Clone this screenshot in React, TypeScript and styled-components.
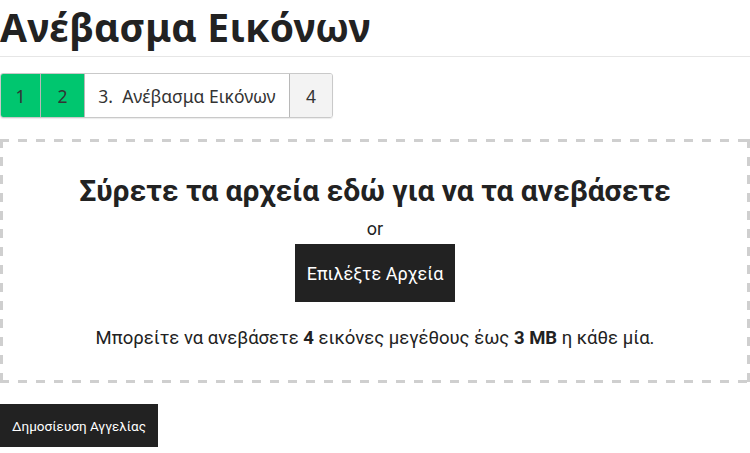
import React from "react";
import styled, { createGlobalStyle } from "styled-components";

const Global = createGlobalStyle`
  html, body { margin: 0; padding: 0; background: #fff; }
  body { font-family: "Noto Sans", sans-serif; color: #222; }
  * { box-sizing: border-box; }
`;

const Page = styled.div`
  width: 750px;
  display: flex;
  flex-direction: column;
`;

const Title = styled.h1`
  margin: 0;
  padding: 4px 0 6px;
  font-family: "Noto Sans", sans-serif;
  font-weight: 700;
  font-size: 39px;
  line-height: 46px;
  color: #222;
  letter-spacing: 0.2px;
  border-bottom: 1px solid #e6e6e6;
`;

const Steps = styled.div`
  display: flex;
  align-self: flex-start;
  margin-top: 16px;
  height: 45px;
  border: 1px solid #c9c9c9;
  border-radius: 3px;
  overflow: hidden;
  box-shadow: 0 1px 1px rgba(0,0,0,0.08);
`;

const Step = styled.div<{ $bg: string; $w: number }>`
  display: flex;
  align-items: center;
  justify-content: center;
  width: ${p => p.$w}px;
  background: ${p => p.$bg};
  font-family: "Noto Sans", sans-serif;
  font-size: 17.5px;
  color: #333;
  & + & { border-left: 1px solid #b8b8b8; }
`;

const dashH = "linear-gradient(to right, #cfcfcf 9px, transparent 9px)";
const dashV = "linear-gradient(to bottom, #cfcfcf 9px, transparent 9px)";

const Drop = styled.div`
  margin-top: 21px;
  height: 244px;
  padding: 34px 3px 3px;
  background:
    ${dashH} left top / 18px 3px repeat-x,
    ${dashH} left bottom / 18px 3px repeat-x,
    ${dashV} left top / 3px 18px repeat-y,
    ${dashV} right top / 3px 18px repeat-y;
  display: flex;
  flex-direction: column;
  align-items: center;
  font-family: Roboto, sans-serif;
`;

const DropTitle = styled.h2`
  margin: 0;
  font-family: Roboto, sans-serif;
  font-weight: 700;
  font-size: 30px;
  line-height: 36px;
  color: #222;
`;

const Or = styled.div`
  margin-top: 10px;
  font-size: 18px;
  line-height: 20px;
  color: #222;
`;

const DarkButton = styled.button<{ $size: number; $w: number; $h: number }>`
  border: none;
  background: #222;
  color: #fff;
  width: ${p => p.$w}px;
  height: ${p => p.$h}px;
  font-family: Roboto, sans-serif;
  font-size: ${p => p.$size}px;
  padding: 0;
  cursor: pointer;
`;

const Info = styled.p`
  margin: 24px 0 0;
  font-size: 18.5px;
  line-height: 24px;
  color: #222;
  b { font-weight: 700; }
`;

const Footer = styled.div`
  margin-top: 21px;
  display: flex;
`;

export default function App() {
  return (
    <Page>
      <Global />
      <Title>Ανέβασμα Εικόνων</Title>
      <Steps>
        <Step $bg="#00c66f" $w={39}>1</Step>
        <Step $bg="#00c66f" $w={44}>2</Step>
        <Step $bg="#fff" $w={205}>3.&nbsp; Ανέβασμα Εικόνων</Step>
        <Step $bg="#f3f3f3" $w={43}>4</Step>
      </Steps>
      <Drop>
        <DropTitle>Σύρετε τα αρχεία εδώ για να τα ανεβάσετε</DropTitle>
        <Or>or</Or>
        <DarkButton $size={18} $w={160} $h={58} style={{ marginTop: 5 }}>Επιλέξτε Αρχεία</DarkButton>
        <Info>
          Μπορείτε να ανεβάσετε <b>4</b> εικόνες μεγέθους έως <b>3 MB</b> η κάθε μία.
        </Info>
      </Drop>
      <Footer>
        <DarkButton $size={13.5} $w={158} $h={43}>Δημοσίευση Αγγελίας</DarkButton>
      </Footer>
    </Page>
  );
}
